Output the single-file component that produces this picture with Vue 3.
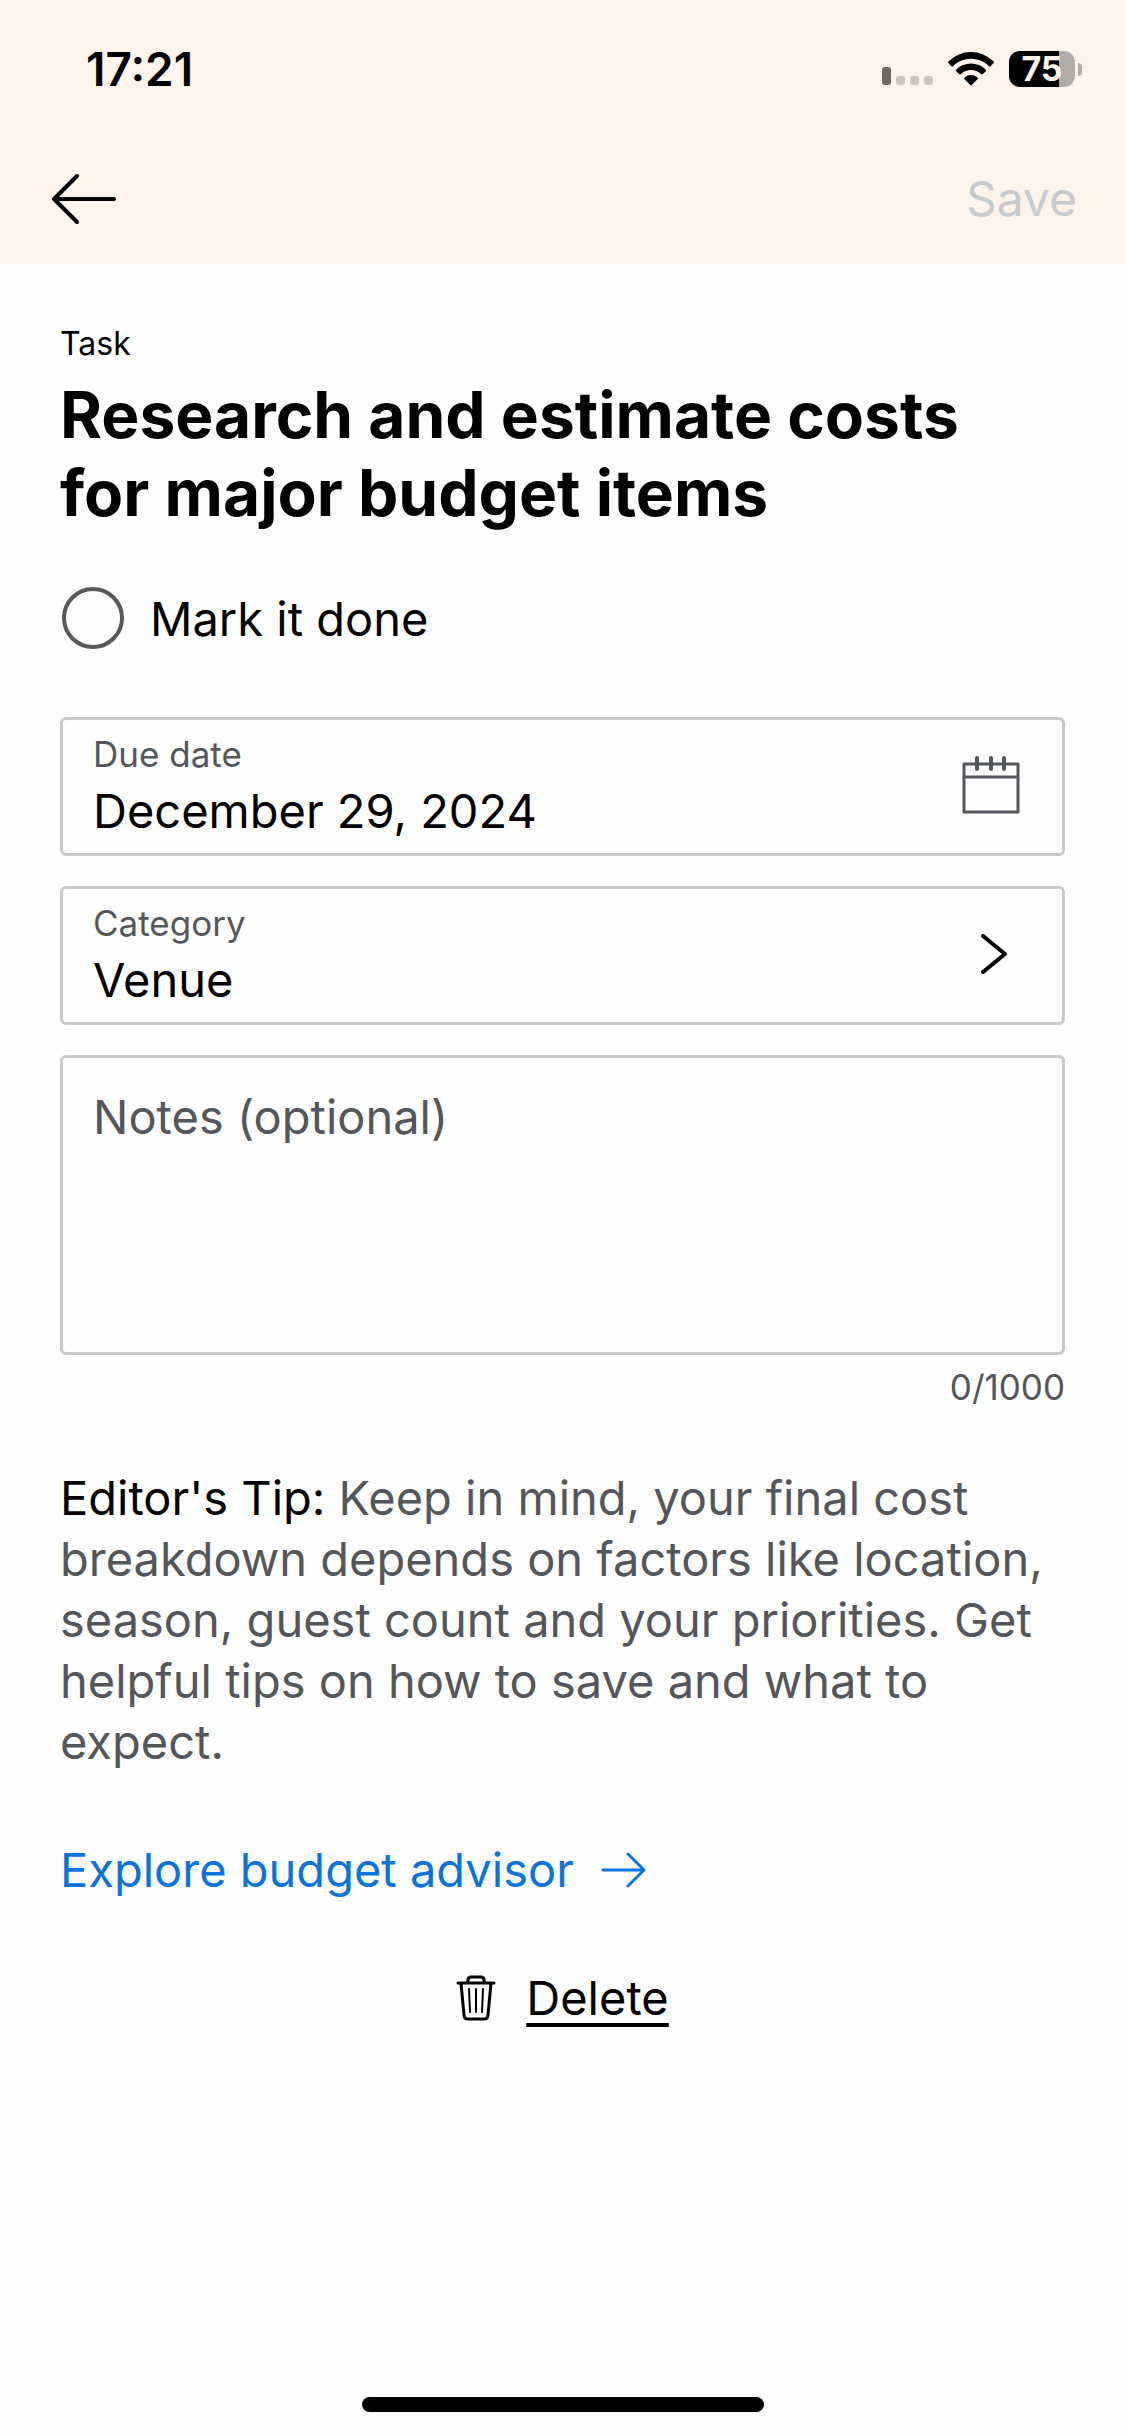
<script setup>
import { computed, ref } from 'vue'

const done = ref(false)
const dueDate = ref('December 29, 2024')
const category = ref('Venue')
const notes = ref('')
const maxNotes = 1000
const battery = 75
const changed = computed(() => done.value || notes.value.length > 0)
</script>

<template>
  <div class="screen">
    <header class="top">
      <div class="status">
        <time class="clock">17:21</time>
        <div class="indicators">
          <svg class="signal" width="51" height="36" viewBox="0 0 51 36" aria-hidden="true">
            <rect x="0" y="16" width="9" height="18" rx="3" fill="#70675f" />
            <rect x="14" y="25" width="9" height="9" rx="3" fill="#cdc4bb" />
            <rect x="28" y="25" width="9" height="9" rx="3" fill="#cdc4bb" />
            <rect x="42" y="25" width="9" height="9" rx="3" fill="#cdc4bb" />
          </svg>
          <svg class="wifi" width="46" height="36" viewBox="0 0 46 36" aria-hidden="true">
            <path d="M.6 10.2a1.4 1.4 0 0 0 0 2l2.600 2.700a1.400 1.400 0 0 0 2 0a25.500 25.500 0 0 1 35.600 0a1.400 1.400 0 0 0 2 0l2.600-2.700a1.400 1.400 0 0 0 0-2a32 32 0 0 0-44.800 0z" />
            <path d="M8.400 18.400a1.400 1.400 0 0 0 0 2l2.700 2.600a1.400 1.400 0 0 0 1.900 0a14.700 14.700 0 0 1 20 0a1.400 1.400 0 0 0 1.900 0l2.700-2.600a1.400 1.400 0 0 0 0-2a21 21 0 0 0-29.200 0z" />
            <path d="M16.600 26.400a1.300 1.300 0 0 0 0 1.900l5.400 5.400a1.400 1.400 0 0 0 2 0l5.400-5.400a1.300 1.300 0 0 0 0-1.900a9.800 9.800 0 0 0-12.800 0z" />
          </svg>
          <div class="battery">
            <div class="cell">
              <div class="charge" :style="{ width: battery + '%' }"></div>
              <span class="level">{{ battery }}</span>
            </div>
            <div class="nub"></div>
          </div>
        </div>
      </div>
      <nav class="bar">
        <button class="back" type="button" aria-label="Back">
          <svg width="66" height="52" viewBox="0 0 66 52" fill="none" stroke="#000" stroke-width="4" stroke-linecap="round" stroke-linejoin="round">
            <path d="M63 26H3M26 3L3 26L26 49" />
          </svg>
        </button>
        <button class="save" type="button" :disabled="!changed">Save</button>
      </nav>
    </header>

    <main class="content">
      <p class="kind">Task</p>
      <h1 class="title">Research and estimate costs for major budget items</h1>

      <label class="done">
        <input v-model="done" class="tick" type="checkbox" />
        <span>Mark it done</span>
      </label>

      <div class="fields">
        <div class="field">
          <div class="pair">
            <label class="caption" for="due">Due date</label>
            <input id="due" v-model="dueDate" class="value" type="text" readonly />
          </div>
          <button class="pick" type="button" aria-label="Choose date">
            <svg width="60" height="60" viewBox="0 0 60 60" fill="none" stroke="#55555c" stroke-width="3" stroke-linecap="round" stroke-linejoin="round">
              <path d="M3 8H57V56H3ZM3 21H57" />
              <path d="M16 2V13M30 2V13M43 2V13" stroke-width="4" />
            </svg>
          </button>
        </div>

        <div class="field">
          <div class="pair">
            <label class="caption" for="category">Category</label>
            <input id="category" v-model="category" class="value" type="text" readonly />
          </div>
          <button class="pick" type="button" aria-label="Choose category">
            <svg width="60" height="60" viewBox="0 0 60 60" fill="none" stroke="#000" stroke-width="4" stroke-linecap="round" stroke-linejoin="round">
              <path d="M22 11L44 29L22 47" />
            </svg>
          </button>
        </div>

        <textarea v-model="notes" class="notes" aria-label="Notes" placeholder="Notes (optional)" :maxlength="maxNotes"></textarea>
      </div>
      <p class="count">{{ notes.length }}/{{ maxNotes }}</p>

      <p class="tip">
        <strong>Editor's Tip:</strong> Keep in mind, your final cost breakdown depends on factors like location, season, guest count and your priorities. Get helpful tips on how to save and what to expect.
      </p>

      <a class="explore" href="#budget-advisor">
        <span>Explore budget advisor</span>
        <svg width="46" height="36" viewBox="0 0 46 36" fill="none" stroke="#0973dd" stroke-width="3" stroke-linecap="round" stroke-linejoin="round" aria-hidden="true">
          <path d="M2 18H43M27 2L43 18L27 34" />
        </svg>
      </a>

      <button class="delete" type="button">
        <svg width="40" height="46" viewBox="0 0 40 46" fill="none" stroke="#000" stroke-width="3" stroke-linecap="round" stroke-linejoin="round" aria-hidden="true">
          <path d="M2 8H38M12 8V5Q12 2 15 2H25Q28 2 28 5V8M5 8L8 40Q8 44 12 44H28Q32 44 32 40L35 8" />
          <path d="M13 14L14 37M20 14V37M27 14L26 37" stroke-width="2" />
        </svg>
        <span class="word">Delete</span>
      </button>
    </main>

    <div class="home"></div>
  </div>
</template>

<style>
body {
  margin: 0;
  background: #fefefe;
}
</style>

<style scoped>
.screen {
  display: flex;
  flex-direction: column;
  min-height: 100vh;
  font-family: Inter, "Liberation Sans", sans-serif;
  font-size: 47px;
  line-height: 61px;
  color: #000;
}
button,
input,
textarea {
  margin: 0;
  padding: 0;
  border: 0;
  background: none;
  font: inherit;
  color: inherit;
}
p,
h1 {
  margin: 0;
}
svg {
  display: block;
  flex: none;
}
.top {
  background: #fff4eb;
}
.status {
  display: flex;
  justify-content: space-between;
  align-items: center;
  height: 138px;
  padding: 0 43px 0 86px;
}
.clock {
  font-size: 46px;
  font-weight: 600;
}
.indicators {
  display: flex;
  align-items: center;
}
.signal {
  margin-right: 15px;
}
.wifi {
  margin-right: 15px;
}
.battery {
  display: flex;
  align-items: center;
  gap: 3px;
}
.cell {
  display: grid;
  align-items: center;
  width: 66px;
  height: 36px;
  border-radius: 11px;
  background: #b3aba5;
}
.charge,
.level {
  grid-area: 1 / 1;
}
.charge {
  height: 36px;
  border-radius: 11px 0 0 11px;
  background: #000;
}
.level {
  font-size: 34px;
  line-height: 36px;
  font-weight: 700;
  text-align: center;
  color: #fff4eb;
}
.nub {
  width: 4px;
  height: 13px;
  border-radius: 0 4px 4px 0;
  background: #b3aba5;
}
.bar {
  display: flex;
  justify-content: space-between;
  align-items: center;
  height: 121px;
  padding: 0 48px 5px 51px;
}
.save {
  font-size: 48px;
}
.save:disabled {
  color: #c8cacc;
}
.content {
  display: flex;
  flex-direction: column;
  padding: 56px 60px 0;
}
.kind {
  font-size: 32px;
  line-height: 48px;
}
.title {
  margin-top: 8px;
  padding-right: 60px;
  font-size: 64px;
  line-height: 78px;
  font-weight: 700;
}
.done {
  display: flex;
  align-items: center;
  gap: 26px;
  margin: 55px 0 68px 2px;
}
.tick {
  flex: none;
  appearance: none;
  width: 62px;
  height: 62px;
  border: 4px solid #58595b;
  border-radius: 50%;
}
.tick:checked {
  background: #58595b;
}
.fields {
  display: flex;
  flex-direction: column;
  gap: 30px;
}
.field {
  display: flex;
  justify-content: space-between;
  align-items: center;
  padding: 10px 41px 12px 30px;
  border: 3px solid #c9c9c9;
  border-radius: 6px;
}
.pair {
  display: flex;
  flex-direction: column;
  flex: 1;
  gap: 2px;
  min-width: 0;
}
.caption {
  font-size: 35px;
  line-height: 48px;
  color: #55565a;
}
.value {
  height: 61px;
}
.notes {
  box-sizing: border-box;
  height: 300px;
  padding: 28px 30px;
  border: 3px solid #c9c9c9;
  border-radius: 6px;
  resize: none;
}
.notes::placeholder {
  color: #55565a;
  opacity: 1;
}
.count {
  margin-top: 8px;
  font-size: 35px;
  line-height: 48px;
  text-align: right;
  color: #55565a;
}
.tip {
  margin-top: 56px;
  color: #55565a;
}
.tip strong {
  font-weight: 400;
  color: #000;
}
.explore {
  display: flex;
  align-items: center;
  align-self: flex-start;
  gap: 27px;
  margin-top: 67px;
  color: #0973dd;
  text-decoration: none;
}
.delete {
  display: flex;
  align-items: center;
  align-self: center;
  gap: 30px;
  margin-top: 67px;
}
.word {
  text-decoration: underline;
  text-decoration-thickness: 4px;
  text-underline-offset: 8px;
  text-decoration-skip-ink: none;
}
.home {
  flex: none;
  align-self: center;
  width: 402px;
  height: 15px;
  margin: auto 0 24px;
  border-radius: 8px;
  background: #000;
}
</style>
